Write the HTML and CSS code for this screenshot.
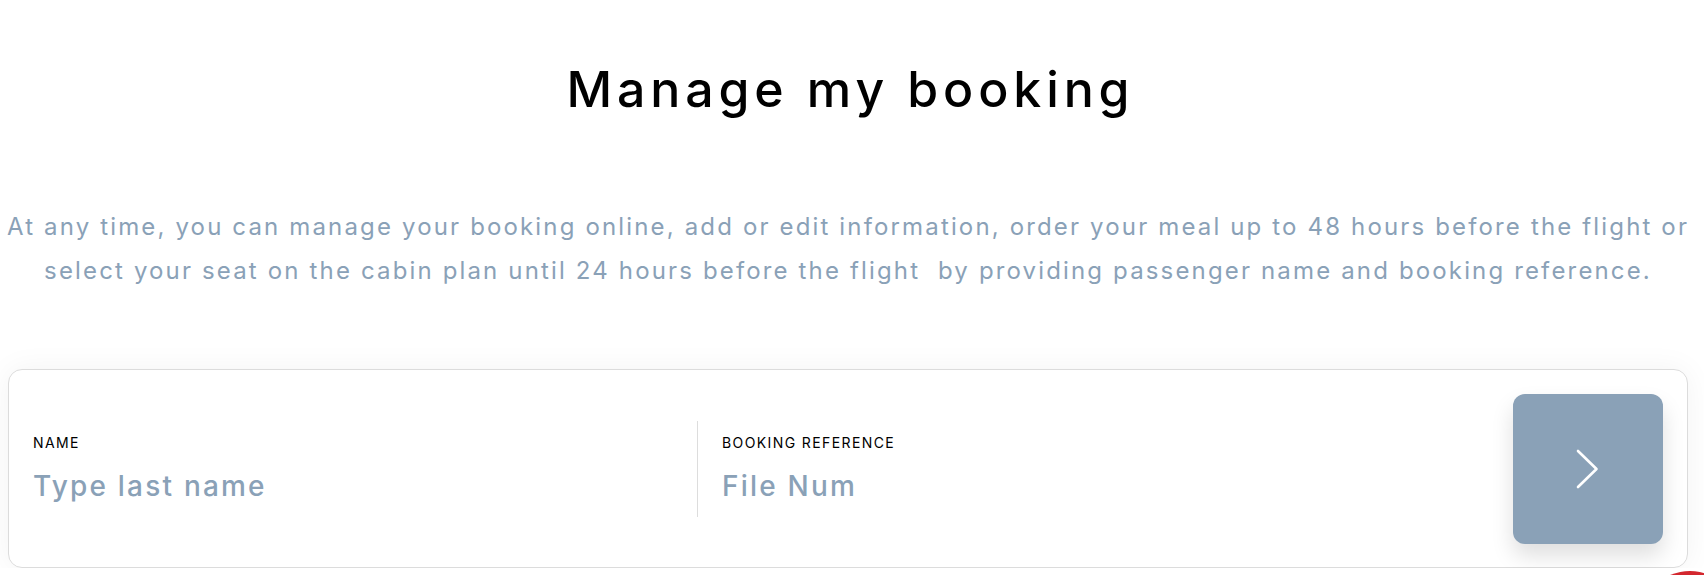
FILE: index.html
```html
<!DOCTYPE html>
<html lang="en">
<head>
<meta charset="utf-8">
<title>Manage my booking</title>
<link rel="stylesheet" href="styles.css">
</head>
<body>
<main class="page">
  <h1 class="title">Manage my booking</h1>
  <p class="intro">At any time, you can manage your booking online, add or edit information, order your meal up to 48 hours before the flight or<br>select your seat on the cabin plan until 24 hours before the flight&nbsp; by providing passenger name and booking reference.</p>
  <form class="card">
    <div class="field field-name">
      <label class="label" for="lastname">NAME</label>
      <input class="input" id="lastname" type="text" placeholder="Type last name">
    </div>
    <div class="field field-ref">
      <label class="label" for="fileno">BOOKING REFERENCE</label>
      <input class="input" id="fileno" type="text" placeholder="File Num">
    </div>
    <button class="go" type="button" aria-label="Continue">
      <svg class="chev" width="24" height="40" viewBox="0 0 24 40"><path d="M2 2 L20.5 20 L2 38" fill="none" stroke="#fff" stroke-width="2.6" stroke-linecap="round" stroke-linejoin="round"/></svg>
    </button>
  </form>
</main>
<div class="chat-bubble"></div>
</body>
</html>
```
FILE: styles.css
```css
html, body {
  margin: 0;
  padding: 0;
  background: #ffffff;
  overflow: hidden;
}
body {
  font-family: Inter, "Noto Sans", "Liberation Sans", sans-serif;
  color: #000;
}
.page {
  padding: 59px 16px 0 8px;
  width: 1680px;
}
.title {
  margin: 0;
  font-size: 50px;
  line-height: 60px;
  font-weight: 500;
  text-align: center;
  letter-spacing: 4.9px;
  text-indent: 4.9px;
}
.intro {
  margin: 86px -8px 0;
  font-size: 24px;
  line-height: 44px;
  font-weight: 400;
  color: #8aa1b7;
  text-align: center;
  white-space: nowrap;
  letter-spacing: 2.15px;
}
.card {
  margin: 76px 0 0;
  box-sizing: border-box;
  width: 1680px;
  height: 199px;
  border: 1px solid #dcdcdc;
  border-radius: 14px;
  padding: 24px;
  display: flex;
  align-items: center;
  background: #fff;
  box-shadow: 0 0 30px rgba(0, 0, 0, 0.05);
}
.field {
  box-sizing: border-box;
  height: 96px;
  padding: 13px 0 14px;
  display: flex;
  flex-direction: column;
}
.field-name {
  width: 664px;
  flex: none;
}
.field-ref {
  flex: 1;
  border-left: 1px solid #dddddd;
  padding-left: 24px;
}
.label {
  font-size: 14px;
  line-height: 17px;
  font-weight: 400;
  color: #000;
  letter-spacing: 1.4px;
  margin-bottom: 18px;
}
.input {
  border: none;
  outline: none;
  padding: 0;
  margin: 0;
  height: 34px;
  width: 100%;
  font-family: inherit;
  font-size: 28px;
  line-height: 34px;
  font-weight: 500;
  color: #33495e;
  background: transparent;
  letter-spacing: 2.2px;
}
.input::placeholder {
  color: #8aa1b7;
  opacity: 1;
}
.go {
  flex: none;
  width: 150px;
  height: 150px;
  border: none;
  border-radius: 12px;
  background: #8aa1b7;
  box-shadow: 0 12px 22px rgba(0, 0, 0, 0.13);
  display: flex;
  align-items: center;
  justify-content: center;
  padding: 0;
  cursor: pointer;
}
.chev {
  display: block;
}
.chat-bubble {
  position: fixed;
  left: 1640px;
  top: 571px;
  width: 100px;
  height: 100px;
  border-radius: 50%;
  background: #d3272e;
}
```
